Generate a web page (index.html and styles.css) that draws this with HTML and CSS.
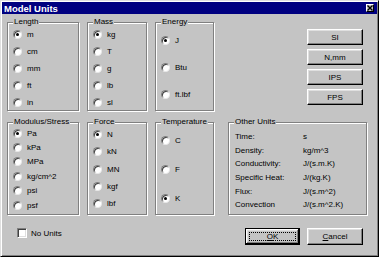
FILE: index.html
```html
<!DOCTYPE html>
<html lang="en">
<head>
    <meta charset="UTF-8">
    <title>Model Units</title>
    <link rel="stylesheet" href="styles.css">
</head>
<body>
    <div class="window">
        <div class="titlebar">
            <span class="title">Model Units</span>
            <span class="close">
                <svg width="6" height="6" viewBox="0 0 6 6"><path d="M0.5 0.5L5.5 5.5M5.5 0.5L0.5 5.5" stroke="#000" stroke-width="1.4"/></svg>
            </span>
        </div>
        <div class="content">
            <div class="group">
                <span class="legend">Length</span>
                <div class="opts rows-length">
                    <div class="opt"><span class="radio on"></span>m</div>
                    <div class="opt"><span class="radio"></span>cm</div>
                    <div class="opt"><span class="radio"></span>mm</div>
                    <div class="opt"><span class="radio"></span>ft</div>
                    <div class="opt"><span class="radio"></span>in</div>
                </div>
            </div>
            <div class="group">
                <span class="legend">Mass</span>
                <div class="opts rows-length">
                    <div class="opt"><span class="radio on"></span>kg</div>
                    <div class="opt"><span class="radio"></span>T</div>
                    <div class="opt"><span class="radio"></span>g</div>
                    <div class="opt"><span class="radio"></span>lb</div>
                    <div class="opt"><span class="radio"></span>sl</div>
                </div>
            </div>
            <div class="group">
                <span class="legend">Energy</span>
                <div class="opts rows-energy">
                    <div class="opt"><span class="radio on"></span>J</div>
                    <div class="opt"><span class="radio"></span>Btu</div>
                    <div class="opt"><span class="radio"></span>ft.lbf</div>
                </div>
            </div>
            <div class="presets">
                <button class="btn">SI</button>
                <button class="btn">N,mm</button>
                <button class="btn">IPS</button>
                <button class="btn">FPS</button>
            </div>

            <div class="group">
                <span class="legend">Modulus/Stress</span>
                <div class="opts rows-modulus">
                    <div class="opt"><span class="radio on"></span>Pa</div>
                    <div class="opt"><span class="radio"></span>kPa</div>
                    <div class="opt"><span class="radio"></span>MPa</div>
                    <div class="opt"><span class="radio"></span>kg/cm^2</div>
                    <div class="opt"><span class="radio"></span>psi</div>
                    <div class="opt"><span class="radio"></span>psf</div>
                </div>
            </div>
            <div class="group">
                <span class="legend">Force</span>
                <div class="opts rows-force">
                    <div class="opt"><span class="radio on"></span>N</div>
                    <div class="opt"><span class="radio"></span>kN</div>
                    <div class="opt"><span class="radio"></span>MN</div>
                    <div class="opt"><span class="radio"></span>kgf</div>
                    <div class="opt"><span class="radio"></span>lbf</div>
                </div>
            </div>
            <div class="group">
                <span class="legend">Temperature</span>
                <div class="opts rows-temp">
                    <div class="opt"><span class="radio"></span>C</div>
                    <div class="opt"><span class="radio"></span>F</div>
                    <div class="opt"><span class="radio on"></span>K</div>
                </div>
            </div>
            <div class="group other">
                <span class="legend">Other Units</span>
                <div class="unit-list">
                    <span>Time:</span><span>s</span>
                    <span>Density:</span><span>kg/m^3</span>
                    <span>Conductivity:</span><span>J/(s.m.K)</span>
                    <span>Specific Heat:</span><span>J/(kg.K)</span>
                    <span>Flux:</span><span>J/(s.m^2)</span>
                    <span>Convection</span><span>J/(s.m^2.K)</span>
                </div>
            </div>
        </div>
        <div class="footer">
            <div class="check-row"><span class="checkbox"></span>No Units</div>
            <div class="actions">
                <button class="btn default"><u>O</u>K</button>
                <button class="btn"><u>C</u>ancel</button>
            </div>
        </div>
    </div>
</body>
</html>
```

FILE: styles.css
```css
body {
    margin: 0;
    padding: 0;
    font-family: "Liberation Sans", Arial, sans-serif;
    font-size: 8px;
    line-height: 9px;
    color: #000;
    background-color: #c4c4c4;
}
.window {
    width: 379px;
    height: 257px;
    box-sizing: border-box;
    padding: 1px;
    background-color: #c4c4c4;
    border: 1px solid;
    border-color: #dfdfdf #000 #000 #dfdfdf;
    box-shadow: inset 1px 1px #fff, inset -1px -1px #808080;
}
.titlebar {
    height: 12px;
    display: flex;
    align-items: center;
    justify-content: space-between;
    padding: 0 3px 0 2px;
    background-color: #000080;
}
.title {
    color: #fff;
    font-weight: bold;
    font-size: 9.5px;
}
.close {
    width: 8px;
    height: 8px;
    box-sizing: border-box;
    display: flex;
    align-items: center;
    justify-content: center;
    background-color: #c4c4c4;
    border: 1px solid;
    border-color: #fff #000 #000 #fff;
}
.close svg {
    display: block;
}
.content {
    display: grid;
    grid-template-columns: 72px 60px 59px 1fr;
    grid-template-rows: 89px 93px;
    column-gap: 8px;
    row-gap: 11px;
    padding: 8px 10px 0 5px;
}
.group {
    position: relative;
    border: 1px solid #808080;
    box-shadow: inset 1px 1px #fff, 1px 1px #fff;
}
.legend {
    position: absolute;
    top: -6px;
    left: 5px;
    padding: 0 1px;
    background-color: #c4c4c4;
    white-space: nowrap;
}
.opts {
    display: flex;
    flex-direction: column;
    padding-left: 5px;
}
.opt {
    display: flex;
    align-items: center;
}
.rows-length { padding-top: 3px; }
.rows-length .opt { height: 17px; }
.rows-energy { padding-top: 4px; }
.rows-energy .opt { height: 27px; }
.rows-modulus { padding-top: 3px; }
.rows-modulus .opt { height: 14.4px; }
.rows-force { padding-top: 3px; }
.rows-force .opt { height: 17.3px; }
.rows-temp { padding-top: 3px; }
.rows-temp .opt { height: 29px; }
.radio {
    width: 9px;
    height: 9px;
    box-sizing: border-box;
    margin-right: 5px;
    border-radius: 50%;
    border: 1px solid;
    border-color: #808080 #e8e8e8 #e8e8e8 #808080;
    background-color: #fff;
    box-shadow: inset 1px 1px 0 #404040;
    display: flex;
    align-items: center;
    justify-content: center;
}
.radio.on::before {
    content: "";
    width: 3px;
    height: 3px;
    border-radius: 50%;
    background-color: #000;
}
.presets {
    display: flex;
    flex-direction: column;
    align-items: flex-end;
    gap: 4px;
    padding-top: 7px;
    padding-right: 4px;
}
.btn {
    position: relative;
    width: 56px;
    height: 16px;
    padding: 0;
    font-family: inherit;
    font-size: 8px;
    line-height: 9px;
    color: #000;
    background-color: #c4c4c4;
    border: 1px solid;
    border-color: #fff #000 #000 #fff;
    box-shadow: inset -1px -1px #808080, inset 1px 1px #dfdfdf;
}
.btn u {
    text-decoration: underline;
}
.btn.default {
    width: 55px;
    height: 17px;
    border-color: #000;
    box-shadow: inset -1px -1px #000, inset 1px 1px #fff, inset -2px -2px #808080, inset 2px 2px #dfdfdf;
}
.btn.default::after {
    content: "";
    position: absolute;
    top: 3px;
    left: 3px;
    right: 3px;
    bottom: 3px;
    border: 1px dotted #000;
}
.other {
    margin-left: 6px;
}
.unit-list {
    display: grid;
    grid-template-columns: 68px 1fr;
    grid-auto-rows: 13.6px;
    align-items: center;
    padding: 7px 0 0 6px;
}
.footer {
    display: flex;
    justify-content: space-between;
    align-items: flex-start;
    margin-top: 13px;
    padding: 0 14px 0 15px;
}
.check-row {
    display: flex;
    align-items: center;
    height: 10px;
}
.checkbox {
    width: 10px;
    height: 10px;
    box-sizing: border-box;
    margin-right: 4px;
    background-color: #fff;
    border: 1px solid;
    border-color: #808080 #fff #fff #808080;
    box-shadow: inset 1px 1px #404040, inset -1px -1px #dfdfdf;
}
.actions {
    display: flex;
    gap: 7px;
}
.actions .btn {
    height: 17px;
}
```
